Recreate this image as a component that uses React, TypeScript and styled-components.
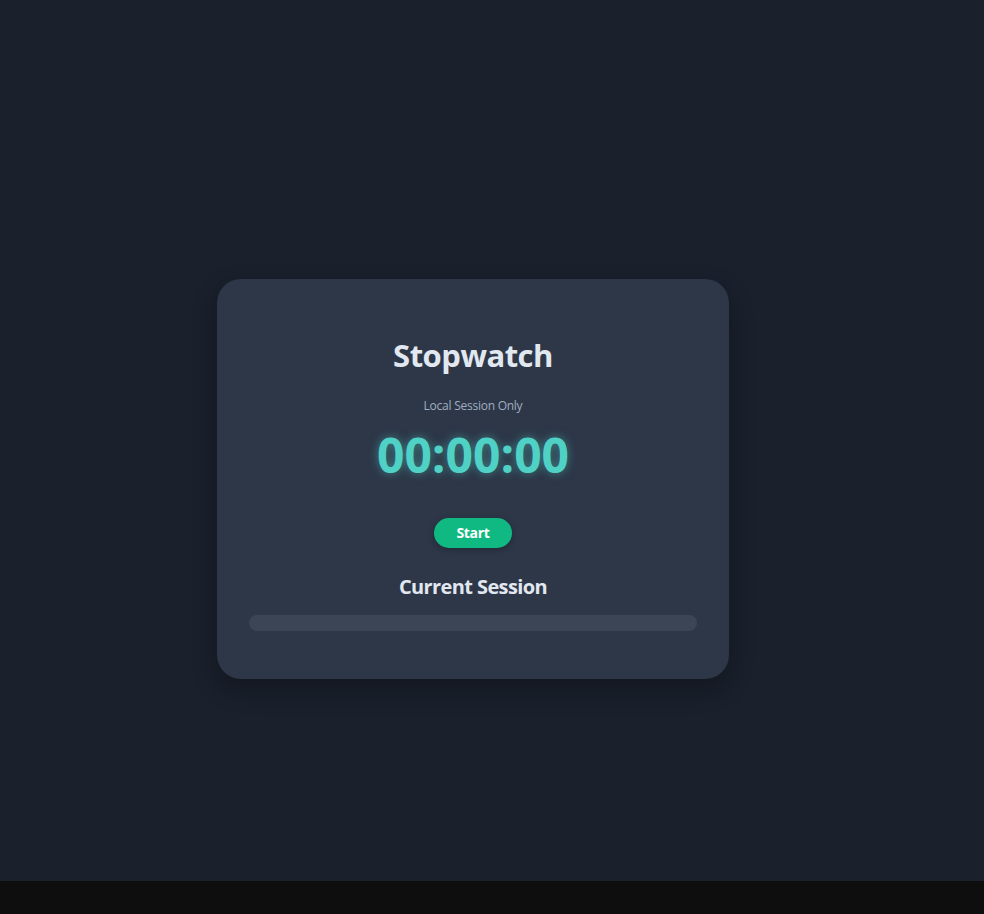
import React from "react";
import styled, { createGlobalStyle } from "styled-components";

const GlobalStyle = createGlobalStyle`
  html, body {
    margin: 0;
    padding: 0;
    background: #0e0e0e;
  }
  body {
    font-family: "Open Sans", "Noto Sans", sans-serif;
  }
`;

const Page = styled.div`
  box-sizing: border-box;
  height: 881px;
  background: #1a202c;
  display: flex;
  justify-content: center;
  align-items: center;
  padding: 77px 38px 0 0;
`;

const Card = styled.div`
  box-sizing: border-box;
  width: 512px;
  height: 400px;
  background: #2d3748;
  border-radius: 24px;
  padding: 57px 32px 48px;
  display: flex;
  flex-direction: column;
  align-items: center;
  box-shadow: 0 10px 25px rgba(0, 0, 0, 0.3);
`;

const Title = styled.h1`
  margin: 0;
  font-size: 31px;
  line-height: 38px;
  letter-spacing: -0.5px;
  font-weight: 700;
  color: #e2e8f0;
`;

const Subtitle = styled.p`
  margin: 24px 0 0;
  font-size: 12px;
  line-height: 16px;
  letter-spacing: -0.25px;
  color: #a0aec0;
`;

const Timer = styled.div`
  margin-top: 12px;
  font-size: 48px;
  line-height: 57.6px;
  font-weight: 700;
  color: #4fd1c5;
  text-shadow: 0 0 10px rgba(79, 209, 197, 0.5);
`;

const Button = styled.button<{ $tone?: string }>`
  margin-top: 34px;
  border: none;
  border-radius: 9999px;
  padding: 6px 22.5px;
  font-family: inherit;
  font-size: 14px;
  line-height: 18px;
  letter-spacing: -0.3px;
  font-weight: 700;
  color: #ffffff;
  background: ${(p) => p.$tone ?? "#10b981"};
  box-shadow: 0 2px 6px rgba(0, 0, 0, 0.25);
  cursor: pointer;
`;

const SectionTitle = styled.h2`
  margin: 27px 0 0;
  font-size: 20px;
  line-height: 24px;
  letter-spacing: -0.6px;
  font-weight: 700;
  color: #e2e8f0;
`;

const Track = styled.div`
  align-self: stretch;
  margin-top: 16px;
  height: 16px;
  border-radius: 8px;
  background: #3b4556;
`;

export default function App() {
  return (
    <>
      <GlobalStyle />
      <Page>
        <Card>
          <Title>Stopwatch</Title>
          <Subtitle>Local Session Only</Subtitle>
          <Timer>00:00:00</Timer>
          <Button>Start</Button>
          <SectionTitle>Current Session</SectionTitle>
          <Track />
        </Card>
      </Page>
    </>
  );
}
